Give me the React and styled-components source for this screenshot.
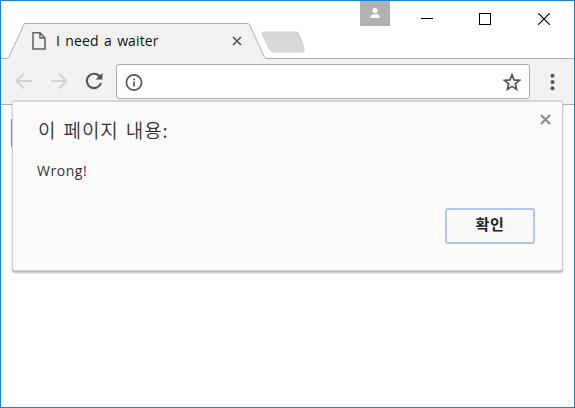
import React from "react";
import styled, { createGlobalStyle } from "styled-components";

const GlobalStyle = createGlobalStyle`
  * { box-sizing: border-box; }
  body { margin: 0; overflow: hidden; background: #fff; }
`;

const Window = styled.div`
  position: relative;
  display: flex;
  flex-direction: column;
  width: 575px;
  height: 408px;
  border: 1px solid #1c80d5;
  background: #fff;
  font-family: "Open Sans", "Noto Sans CJK KR", sans-serif;
`;

const TitleBar = styled.header`
  display: flex;
  height: 58px;
  box-shadow: inset 0 -1px #b0b0b0;
`;

const Tab = styled.div`
  position: relative;
  display: flex;
  align-items: center;
  width: 266px;
  height: 36px;
  margin-top: 22px;
  padding: 0 25px 0 31px;
  flex: none;
`;

const TabShape = styled.svg`
  position: absolute;
  inset: 0;
`;

const Glyph = styled.svg`
  position: relative;
  display: block;
  flex: none;
`;

const TabTitle = styled.span`
  position: relative;
  flex: 1;
  margin-left: 10px;
  font-size: 14px;
  line-height: 20px;
  letter-spacing: 0.1px;
  word-spacing: 1.6px;
  color: #111;
  white-space: nowrap;
`;

const NewTab = styled.svg`
  flex: none;
  margin: 29px 0 0 -7px;
`;

const Controls = styled.div`
  display: flex;
  align-items: flex-start;
  margin-left: auto;
`;

const Profile = styled.div`
  display: flex;
  justify-content: center;
  width: 30px;
  height: 25px;
  padding-top: 6px;
  background: #b2b2b2;
`;

const WindowButton = styled.button`
  display: flex;
  justify-content: center;
  width: ${({ $width }) => $width}px;
  height: 30px;
  padding: 12px 0 0 ${({ $inset = 0 }) => $inset}px;
  border: 0;
  background: none;
`;

const Toolbar = styled.nav`
  display: flex;
  align-items: center;
  height: 46px;
  padding: 0 12px 0 14px;
  border-bottom: 1px solid #b0b0b0;
  background: #f1f1f1;
  flex: none;
`;

const Navigation = styled.div`
  display: flex;
  gap: 17px;
  width: 101px;
  padding-bottom: 1px;
`;

const AddressBar = styled.div`
  display: flex;
  align-items: center;
  justify-content: space-between;
  width: 414px;
  height: 35px;
  padding: 0 8px 0 8px;
  border: 1px solid #a9a9a9;
  border-radius: 3px;
  background: #fff;
`;

const MenuIcon = styled(Glyph)`
  margin-left: auto;
`;

const Page = styled.main`
  flex: 1;
  padding: 14px 10px;
`;

const Field = styled.div`
  width: 170px;
  height: 28px;
  border: 1px solid #999;
`;

const Dialog = styled.section`
  position: absolute;
  top: 99px;
  left: 11px;
  width: 551px;
  height: 171px;
  padding: 16px 25px 0 24px;
  border: 1px solid #cfcfcf;
  border-top: 2px solid #d4d4d4;
  border-radius: 3px;
  background: #fbfbfb;
  box-shadow: 0 1px 0 #bcbcbc, 0 2px 2px rgba(0, 0, 0, 0.28);
`;

const DialogClose = styled.button`
  position: absolute;
  top: 12px;
  right: 11px;
  padding: 0;
  border: 0;
  background: none;
`;

const Heading = styled.h1`
  margin: 0 0 0 1px;
  font-family: "Noto Sans CJK KR", sans-serif;
  font-size: 19px;
  line-height: 24px;
  font-weight: 350;
  letter-spacing: 0.9px;
  word-spacing: 2px;
  color: #333;
`;

const Message = styled.p`
  margin: 19px 0 0;
  font-size: 14px;
  line-height: 20px;
  letter-spacing: 0.55px;
  color: #333;
`;

const Actions = styled.div`
  display: flex;
  justify-content: flex-end;
  padding: 27px 2px 0 0;
`;

const ConfirmButton = styled.button`
  width: 90px;
  height: 36px;
  padding: 0 0 4px;
  border: 2px solid #adc6fa;
  border-radius: 3px;
  background: #fafafa;
  font: 700 15px/20px "Noto Sans CJK KR", sans-serif;
  letter-spacing: 0.6px;
  color: #222;
`;

export default function App() {
  return (
    <>
      <GlobalStyle />
      <Window>
        <TitleBar>
          <Tab>
            <TabShape width="266" height="36" viewBox="0 0 266 36">
              <path d="M0 35.500H5.500Q7 35.500 8 33.500L23.500 .5H246.500Q248 .5 248.700 2L263 33.500Q264 35.500 266 35.500V36H0Z" fill="#f1f1f1" />
              <path d="M0 35.500H5.500Q7 35.500 8 33.500L23.500 .5H246.500Q248 .5 248.700 2L263 33.500Q264 35.500 266 35.500" fill="none" stroke="#b0b0b0" />
              <path d="M8.500 35.500H262.500" stroke="#f1f1f1" />
            </TabShape>
            <Glyph width="14" height="18" viewBox="0 0 14 18" fill="none" stroke="#606060" strokeWidth="1.500">
              <path d="M1 .8H8L13 6V17H1ZM8 .8V6H13" />
            </Glyph>
            <TabTitle>I need a waiter</TabTitle>
            <Glyph width="10" height="10" viewBox="0 0 10 10" stroke="#505050" strokeWidth="1.600">
              <path d="M1 1L9 9M9 1L1 9" />
            </Glyph>
          </Tab>
          <NewTab width="46" height="24" viewBox="0 0 46 24">
            <path d="M4 2H36Q38 2 39 4L44 19Q45 22 42.500 22H14Q11 22 9.800 20L2.500 5Q1 2 4 2Z" fill="#d9d9d9" stroke="#cecece" />
          </NewTab>
          <Controls>
            <Profile>
              <Glyph width="12" height="12" viewBox="0 0 12 12" fill="#fff">
                <circle cx="6" cy="3.500" r="2.600" />
                <path d="M1.500 11V9.500Q1.500 7 6 7T10.500 9.500V11Z" />
              </Glyph>
            </Profile>
            <WindowButton $width={74} aria-label="Minimize">
              <Glyph width="12" height="12" viewBox="0 0 12 12" stroke="#000"><path d="M0 5.500H12" /></Glyph>
            </WindowButton>
            <WindowButton $width={42} aria-label="Maximize">
              <Glyph width="12" height="12" viewBox="0 0 12 12" fill="none" stroke="#000"><rect x=".5" y=".5" width="11" height="11" /></Glyph>
            </WindowButton>
            <WindowButton $width={68} $inset={8} aria-label="Close">
              <Glyph width="12" height="12" viewBox="0 0 12 12" stroke="#000" strokeWidth="1.200"><path d="M.3 .3L11.700 11.700M11.700 .3L.3 11.700" /></Glyph>
            </WindowButton>
          </Controls>
        </TitleBar>
        <Toolbar>
          <Navigation>
            <Glyph width="18" height="18" viewBox="0 0 18 18" fill="none" stroke="#d2d2d2" strokeWidth="2">
              <path d="M17 9H2M9 1.500L1.500 9L9 16.500" />
            </Glyph>
            <Glyph width="18" height="18" viewBox="0 0 18 18" fill="none" stroke="#d2d2d2" strokeWidth="2">
              <path d="M1 9H16M9 1.500L16.500 9L9 16.500" />
            </Glyph>
            <Glyph width="18" height="18" viewBox="0 0 18 18" fill="none" stroke="#555" strokeWidth="2.100">
              <path d="M14.800 4.500A7.200 7.200 0 1 0 16 11" />
              <path d="M17.500 .8V7.500H10.500Z" fill="#555" stroke="none" />
            </Glyph>
          </Navigation>
          <AddressBar>
            <Glyph width="18" height="18" viewBox="0 0 18 18">
              <circle cx="9" cy="9.500" r="7.600" fill="none" stroke="#555" strokeWidth="1.700" />
              <path d="M9 8.500V13.500M9 5.500V7.200" stroke="#555" strokeWidth="1.700" />
            </Glyph>
            <Glyph width="19" height="19" viewBox="0 0 19 19">
              <path transform="translate(.5 .8)" d="M9.500 2L11.500 7.100L17 7.550L12.850 11.100L14.100 16.500L9.500 13.600L4.900 16.500L6.150 11.100L2 7.550L7.500 7.100Z" fill="none" stroke="#555" strokeWidth="1.700" />
            </Glyph>
          </AddressBar>
          <MenuIcon width="20" height="20" viewBox="0 0 20 20" fill="#555">
            <circle cx="10.500" cy="3.700" r="2" /><circle cx="10.500" cy="10" r="2" /><circle cx="10.500" cy="16.300" r="2" />
          </MenuIcon>
        </Toolbar>
        <Page><Field /></Page>
        <Dialog role="dialog">
          <DialogClose aria-label="Close dialog">
            <Glyph width="11" height="11" viewBox="0 0 11 11" stroke="#8b8b8b" strokeWidth="2.100"><path d="M1 1L10 10M10 1L1 10" /></Glyph>
          </DialogClose>
          <Heading>이 페이지 내용:</Heading>
          <Message>Wrong!</Message>
          <Actions><ConfirmButton>확인</ConfirmButton></Actions>
        </Dialog>
      </Window>
    </>
  );
}
